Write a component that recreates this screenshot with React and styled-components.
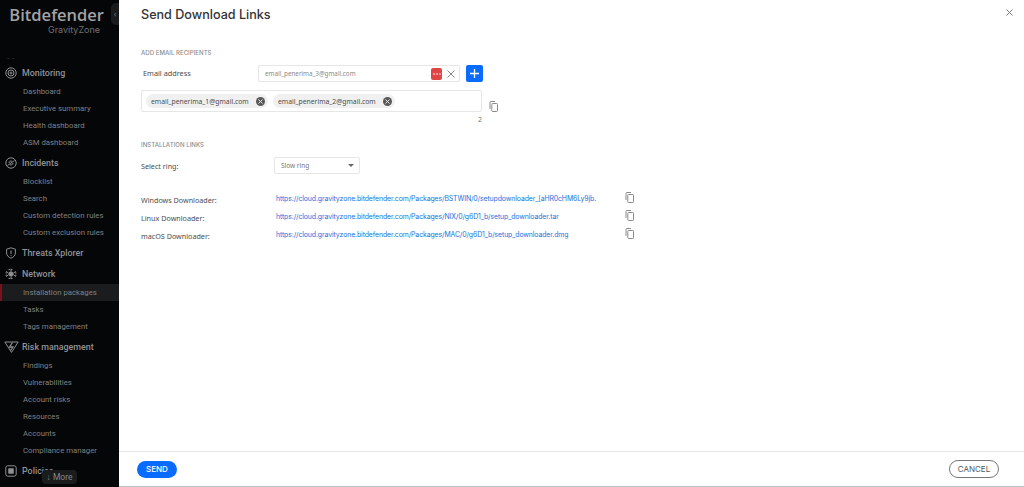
import React from 'react';
import styled, { createGlobalStyle } from 'styled-components';

const navGroups = [
  { title: 'Monitoring', icon: 'radar', items: ['Dashboard', 'Executive summary', 'Health dashboard', 'ASM dashboard'] },
  { title: 'Incidents', icon: 'incidents', items: ['Blocklist', 'Search', 'Custom detection rules', 'Custom exclusion rules'] },
  { title: 'Threats Xplorer', icon: 'shield', items: [] },
  { title: 'Network', icon: 'network', items: ['Installation packages', 'Tasks', 'Tags management'] },
  { title: 'Risk management', icon: 'risk', items: ['Findings', 'Vulnerabilities', 'Account risks', 'Resources', 'Accounts', 'Compliance manager'] },
  { title: 'Policies', icon: 'policies', items: [] },
];

const links = [
  ['Windows Downloader:', 'https://cloud.gravityzone.bitdefender.com/Packages/BSTWIN/0/setupdownloader_[aHR0cHM6Ly9jb.'],
  ['Linux Downloader:', 'https://cloud.gravityzone.bitdefender.com/Packages/NIX/0/g6D1_b/setup_downloader.tar'],
  ['macOS Downloader:', 'https://cloud.gravityzone.bitdefender.com/Packages/MAC/0/g6D1_b/setup_downloader.dmg'],
];

const NavIcon = ({ name }) => {
  const common = { width: 12, height: 12, viewBox: '0 0 12 12', fill: 'none', stroke: '#8d8f91', strokeWidth: 1 };
  if (name === 'radar') return (
    <svg {...common}><circle cx="6" cy="6" r="5.2" /><circle cx="6" cy="6" r="3" /><circle cx="6" cy="6" r="1" /></svg>
  );
  if (name === 'incidents') return (
    <svg {...common}><circle cx="6" cy="6" r="5.2" /><path d="M2.5 8.5 9.5 3.5M4 6a2 2 0 0 1 3-1.7M8 6a2 2 0 0 1-3 1.7" /></svg>
  );
  if (name === 'shield') return (
    <svg {...common}><path d="M6 .8 10.4 2.2V6c0 2.6-2 4.2-4.4 5.2C3.6 10.2 1.6 8.6 1.6 6V2.2Z" /><path d="M6 3.4V7M6 8v.8" /></svg>
  );
  if (name === 'network') return (
    <svg {...common}><circle cx="6" cy="6" r="2.2" fill="#8d8f91" /><path d="M6 .8V3M6 9v2.2M1.2 3.4 3.4 5M8.6 7l2.2 1.6M1.2 8.6 3.4 7M8.6 5l2.2-1.6" /><path d="M3.5 1.6h5M3.5 10.4h5M1.2 4v4M10.8 4v4" strokeDasharray="1.5 1" /></svg>
  );
  if (name === 'risk') return (
    <svg width="15" height="12" viewBox="0 0 15 12" fill="none" stroke="#8d8f91" strokeWidth="1"><path d="M.8 1h13.4L7.5 11.4Z" /><path d="M8.5 1.5 5.5 6h3.4L6.5 9.5" strokeWidth="1.3" /></svg>
  );
  return (
    <svg {...common}><rect x=".8" y=".8" width="10.4" height="10.4" rx="2" /><rect x="3.2" y="3.2" width="5.6" height="5.6" rx=".8" fill="#8d8f91" stroke="none" /></svg>
  );
};

const CopyIcon = () => (
  <svg width="9" height="11" viewBox="0 0 9 11" fill="none" stroke="#8a8a8a" strokeWidth="1">
    <path d="M1 8V1.5A1 1 0 0 1 2 .5h4" />
    <rect x="2.8" y="2.5" width="5.7" height="8" rx=".8" />
  </svg>
);

const App = () => (
  <Page>
    <GlobalStyle />
    <Sidebar>
      <CollapseTab>‹</CollapseTab>
      <Logo>
        <LogoName>Bitdefender</LogoName>
        <LogoSub>GravityZone</LogoSub>
      </Logo>
      <Dashes>- -</Dashes>
      <Nav>
        {navGroups.map(group => (
          <Group key={group.title}>
            <GroupTitle>
              <IconSlot><NavIcon name={group.icon} /></IconSlot>
              {group.title}
            </GroupTitle>
            {group.items.map(item => (
              <NavItem key={item} $active={item === 'Installation packages'}>{item}</NavItem>
            ))}
          </Group>
        ))}
      </Nav>
      <MoreButton>↓ More</MoreButton>
    </Sidebar>
    <Main>
      <Header>
        <Title>Send Download Links</Title>
        <CloseButton>
          <svg width="7" height="7" viewBox="0 0 7 7" stroke="#777" strokeWidth="1"><path d="M.5.5l6 6M6.5.5l-6 6" /></svg>
        </CloseButton>
      </Header>
      <Content>
        <SectionLabel>ADD EMAIL RECIPIENTS</SectionLabel>
        <EmailRow>
          <EmailLabel>Email address</EmailLabel>
          <EmailInput>
            <InputText>email_penerima_3@gmail.com</InputText>
            <RedBadge>
              <svg width="8" height="2" viewBox="0 0 8 2" fill="#fff"><circle cx="1" cy="1" r=".8" /><circle cx="4" cy="1" r=".8" /><circle cx="7" cy="1" r=".8" /></svg>
            </RedBadge>
            <svg width="8" height="8" viewBox="0 0 8 8" stroke="#888" strokeWidth="1"><path d="M.5.5l7 7M7.5.5l-7 7" /></svg>
          </EmailInput>
          <AddButton>
            <svg width="9" height="9" viewBox="0 0 9 9" stroke="#fff" strokeWidth="1.3"><path d="M4.5 0v9M0 4.5h9" /></svg>
          </AddButton>
        </EmailRow>
        <TagRow>
          <TagBox>
            {['email_penerima_1@gmail.com', 'email_penerima_2@gmail.com'].map(email => (
              <Tag key={email}>
                {email}
                <TagClose>
                  <svg width="5" height="5" viewBox="0 0 5 5" stroke="#e8e8e8" strokeWidth="1"><path d="M.5.5l4 4M4.5.5l-4 4" /></svg>
                </TagClose>
              </Tag>
            ))}
          </TagBox>
          <TagCopy><CopyIcon /></TagCopy>
        </TagRow>
        <Counter>2</Counter>

        <InstallLabel>INSTALLATION LINKS</InstallLabel>
        <RingRow>
          <RowLabel>Select ring:</RowLabel>
          <RingSelect>
            Slow ring
            <Caret />
          </RingSelect>
        </RingRow>
        <LinkList>
          {links.map(([label, url]) => (
            <LinkRow key={label}>
              <LinkLabel>{label}</LinkLabel>
              <LinkUrl>{url}</LinkUrl>
              <LinkCopy><CopyIcon /></LinkCopy>
            </LinkRow>
          ))}
        </LinkList>
      </Content>
      <Footer>
        <SendButton>SEND</SendButton>
        <CancelButton>CANCEL</CancelButton>
      </Footer>
    </Main>
  </Page>
);

const GlobalStyle = createGlobalStyle`
  html, body { margin: 0; padding: 0; height: 100%; background: #fff; overflow: hidden; }
  #root { height: 100%; }
  * { box-sizing: border-box; }
`;

const Page = styled.div`
  display: flex;
  width: 1024px;
  height: 487px;
  overflow: hidden;
  font-family: "Open Sans", "Liberation Sans", sans-serif;
`;

const Sidebar = styled.aside`
  position: relative;
  flex: 0 0 119px;
  background: #050608;
  overflow: hidden;
`;

const CollapseTab = styled.div`
  position: absolute;
  top: 3px;
  right: 0;
  width: 8px;
  height: 22px;
  border-radius: 5px 0 0 5px;
  background: #1a1b1d;
  color: #777;
  font-size: 9px;
  line-height: 22px;
  text-align: center;
`;

const Logo = styled.div`
  display: flex;
  flex-direction: column;
  align-items: flex-end;
  width: 104px;
  height: 54px;
  padding-top: 5px;
`;

const LogoName = styled.div`
  font-family: "Open Sans", sans-serif;
  font-size: 16.5px;
  font-weight: 600;
  line-height: 19px;
  color: #a2a3a5;
`;

const LogoSub = styled.div`
  font-family: "Inter", sans-serif;
  font-size: 9px;
  line-height: 11px;
  color: #6f7072;
  margin-right: 4px;
`;

const Dashes = styled.div`
  height: 8px;
  padding-left: 7px;
  color: #3c3d3f;
  font-size: 8px;
  line-height: 6px;
`;

const Nav = styled.nav`
  display: flex;
  flex-direction: column;
`;

const Group = styled.div`
  display: flex;
  flex-direction: column;
`;

const GroupTitle = styled.div`
  display: flex;
  align-items: center;
  height: 21px;
  font-family: "Roboto", sans-serif;
  font-size: 8.9px;
  font-weight: 500;
  color: #909193;
`;

const IconSlot = styled.span`
  display: flex;
  justify-content: center;
  width: 22px;
`;

const NavItem = styled.div`
  height: 17px;
  padding-top: 1px;
  padding-left: ${props => (props.$active ? '21px' : '23px')};
  border-left: ${props => (props.$active ? '2px solid #7d1019' : 'none')};
  background: ${props => (props.$active ? '#1b1c1e' : 'transparent')};
  font-family: "Roboto", sans-serif;
  font-size: 7.8px;
  line-height: 16px;
  color: #7f8082;
  white-space: nowrap;

  &:last-child {
    margin-bottom: 1px;
  }
`;

const MoreButton = styled.div`
  position: absolute;
  left: 42px;
  bottom: 3px;
  width: 35px;
  height: 14px;
  border-radius: 4px;
  background: #1a1b1d;
  color: #87888a;
  font-family: "Roboto", sans-serif;
  font-size: 8.5px;
  line-height: 14px;
  text-align: center;
`;

const Main = styled.main`
  flex: 1;
  display: flex;
  flex-direction: column;
  background: #fff;
  border-bottom: 1px solid #b9c4c9;
`;

const Header = styled.header`
  display: flex;
  justify-content: space-between;
  height: 45px;
  padding: 6px 11px 0 22px;
`;

const Title = styled.h1`
  margin: 0;
  font-family: "Inter", sans-serif;
  font-size: 12.6px;
  font-weight: 500;
  line-height: 17px;
  color: #333;
`;

const CloseButton = styled.div`
  margin-top: 3px;
  line-height: 0;
`;

const Content = styled.section`
  flex: 1;
  padding: 4px 0 0 22px;
`;

const SectionLabel = styled.div`
  height: 10px;
  font-family: "Inter", sans-serif;
  font-size: 6.1px;
  font-weight: 500;
  line-height: 8px;
  color: #8e8e8e;
`;

const EmailRow = styled.div`
  display: flex;
  align-items: center;
  margin-top: 6px;
  height: 17px;
`;

const EmailLabel = styled.div`
  width: 117px;
  padding: 0 0 1px 2px;
  font-family: "Noto Sans", sans-serif;
  font-size: 7.3px;
  color: #4c4c4c;
`;

const EmailInput = styled.div`
  display: flex;
  align-items: center;
  width: 202px;
  height: 17px;
  padding: 0 4px 0 6px;
  border: 1px solid #e6e6e6;
  border-radius: 2px;
`;

const InputText = styled.span`
  flex: 1;
  font-family: "Noto Sans", sans-serif;
  font-size: 6.3px;
  color: #8a8a8a;
`;

const RedBadge = styled.span`
  display: flex;
  align-items: center;
  justify-content: center;
  width: 11px;
  height: 12px;
  margin-right: 5px;
  border-radius: 2px;
  background: #e04444;
`;

const AddButton = styled.div`
  display: flex;
  align-items: center;
  justify-content: center;
  width: 17px;
  height: 17px;
  margin-left: 6px;
  border-radius: 2px;
  background: #0a6cff;
`;

const TagRow = styled.div`
  display: flex;
  align-items: center;
  margin-top: 8px;
`;

const TagBox = styled.div`
  display: flex;
  align-items: center;
  gap: 5px;
  width: 341px;
  height: 22px;
  padding-left: 4px;
  border: 1px solid #e6e6e6;
  border-radius: 2px;
`;

const Tag = styled.span`
  display: flex;
  align-items: center;
  justify-content: space-between;
  width: 122px;
  height: 14px;
  padding: 0 3px 0 5px;
  border-radius: 7px;
  background: #f0f0f0;
  font-family: "Noto Sans", sans-serif;
  font-size: 6.8px;
  color: #4c4c4c;
  white-space: nowrap;
`;

const TagClose = styled.span`
  display: flex;
  align-items: center;
  justify-content: center;
  width: 9px;
  height: 9px;
  border-radius: 50%;
  background: #5a5a5a;
`;

const TagCopy = styled.span`
  margin: 11px 0 0 7px;
  line-height: 0;
`;

const Counter = styled.div`
  width: 341px;
  height: 10px;
  margin-top: 3px;
  font-family: "Noto Sans", sans-serif;
  font-size: 7px;
  line-height: 10px;
  text-align: right;
  color: #777;
`;

const InstallLabel = styled(SectionLabel)`
  margin-top: 16px;
`;

const RingRow = styled.div`
  display: flex;
  align-items: center;
  margin-top: 6px;
  height: 17px;
`;

const RowLabel = styled.div`
  width: 133px;
  font-family: "Noto Sans", sans-serif;
  font-size: 7.2px;
  color: #4c4c4c;
`;

const RingSelect = styled.div`
  display: flex;
  align-items: center;
  justify-content: space-between;
  width: 86px;
  height: 17px;
  padding: 0 5px 0 6px;
  border: 1px solid #e6e6e6;
  border-radius: 2px;
  font-family: "Noto Sans", sans-serif;
  font-size: 6.5px;
  color: #777;
`;

const Caret = styled.span`
  width: 0;
  height: 0;
  border-left: 3px solid transparent;
  border-right: 3px solid transparent;
  border-top: 3px solid #666;
`;

const LinkList = styled.div`
  display: flex;
  flex-direction: column;
  gap: 3px;
  margin-top: 17px;
`;

const LinkRow = styled.div`
  display: flex;
  align-items: center;
  height: 15px;
`;

const LinkLabel = styled.div`
  width: 135px;
  padding-top: 3px;
  font-family: "Noto Sans", sans-serif;
  font-size: 7.2px;
  color: #4c4c4c;
`;

const LinkUrl = styled.div`
  width: 349px;
  font-family: "Inter", sans-serif;
  font-size: 6.9px;
  letter-spacing: -0.1px;
  color: #1a73e0;
  white-space: nowrap;
  overflow: hidden;
`;

const LinkCopy = styled.span`
  margin-top: -2px;
  line-height: 0;
`;

const Footer = styled.footer`
  display: flex;
  align-items: center;
  justify-content: space-between;
  height: 35px;
  padding: 0 25px 0 18px;
  border-top: 1px solid #e6e6e6;
`;

const SendButton = styled.div`
  width: 40px;
  height: 17px;
  border-radius: 9px;
  background: #0a6cff;
  color: #fff;
  font-family: "Inter", sans-serif;
  font-size: 8px;
  font-weight: 500;
  line-height: 17px;
  text-align: center;
`;

const CancelButton = styled.div`
  width: 50px;
  height: 18px;
  border: 1px solid #777;
  border-radius: 9px;
  color: #555;
  font-family: "Inter", sans-serif;
  font-size: 8px;
  line-height: 16px;
  text-align: center;
`;

export default App;
